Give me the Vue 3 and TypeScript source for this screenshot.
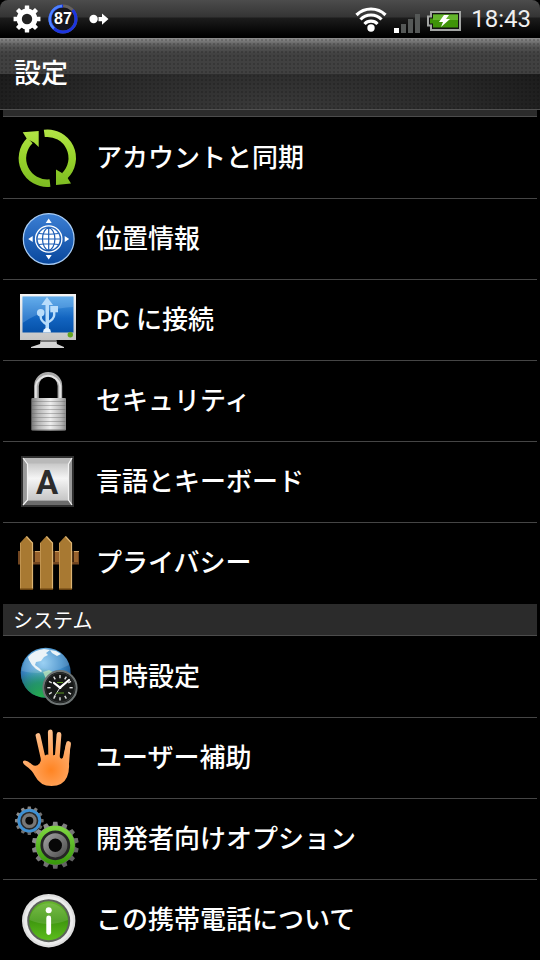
<script setup lang="ts">
type IconName =
  | 'sync' | 'location' | 'pc' | 'lock' | 'keyboard' | 'fence'
  | 'clock' | 'hand' | 'gears' | 'info'

interface Item {
  icon: IconName
  label: string
}

interface Section {
  title: string
  items: Item[]
}

const sections: Section[] = [
  {
    title: 'パーソナル',
    items: [
      { icon: 'sync', label: 'アカウントと同期' },
      { icon: 'location', label: '位置情報' },
      { icon: 'pc', label: 'PC に接続' },
      { icon: 'lock', label: 'セキュリティ' },
      { icon: 'keyboard', label: '言語とキーボード' },
      { icon: 'fence', label: 'プライバシー' },
    ],
  },
  {
    title: 'システム',
    items: [
      { icon: 'clock', label: '日時設定' },
      { icon: 'hand', label: 'ユーザー補助' },
      { icon: 'gears', label: '開発者向けオプション' },
      { icon: 'info', label: 'この携帯電話について' },
    ],
  },
]

// Outline of a cog: each tooth rises from the root radius to the tip radius.
function cog(cx: number, cy: number, tip: number, root: number, teeth: number): string {
  const step = (Math.PI * 2) / teeth
  const points: string[] = []
  for (let i = 0; i < teeth; i++) {
    const a = i * step - Math.PI / 2
    const corners: [number, number][] = [
      [a - step * 0.3, root],
      [a - step * 0.2, tip],
      [a + step * 0.2, tip],
      [a + step * 0.3, root],
    ]
    for (const [angle, r] of corners) {
      points.push(`${(cx + Math.cos(angle) * r).toFixed(2)} ${(cy + Math.sin(angle) * r).toFixed(2)}`)
    }
  }
  return `M${points.join('L')}Z`
}

const statusCog = cog(14, 14, 13.6, 10, 8)
const bigCog = cog(39.3, 38.3, 23.6, 20, 14)
const smallCog = cog(13.3, 13.7, 14.4, 12, 12)
const ticks = Array.from({ length: 12 }, (_, i) => i * 30)
</script>

<template>
  <div class="screen">
    <header class="status">
      <div class="group">
        <svg class="s28" viewBox="0 0 28 28" aria-hidden="true">
          <path :d="statusCog" fill="#fff" />
          <circle cx="14" cy="14" r="10.4" fill="#fff" />
          <circle cx="14" cy="14" r="5.2" fill="#222" />
        </svg>
        <div class="level">
          <svg class="s30" viewBox="0 0 30 30" aria-hidden="true">
            <circle cx="15" cy="15" r="13" fill="#15151c" stroke="#66625f" stroke-width="3" />
            <circle cx="15" cy="15" r="13" fill="none" stroke="#1c35e0" stroke-width="3" pathLength="100" stroke-dasharray="87 13" transform="rotate(-43 15 15)" />
            <path d="M6 24.500A13 13 0 0 1 14 2" fill="none" stroke="#4d83ff" stroke-width="2.400" />
          </svg>
          <span class="level-text">87</span>
        </div>
        <svg class="arrow" viewBox="0 0 20 12" aria-hidden="true">
          <circle cx="4.600" cy="6" r="4.200" fill="#fff" />
          <path d="M9.500 4H13V.5L19.500 6.100 13 11.700V8.200H9.500Z" fill="#fff" />
        </svg>
      </div>
      <div class="group right">
        <svg class="wifi" viewBox="0 0 32 28" aria-hidden="true">
          <g fill="none" stroke="#fff" stroke-width="3.200">
            <path d="M1.500 10A20.500 20.500 0 0 1 30.500 10" />
            <path d="M5.500 14.500A14.500 14.500 0 0 1 26.500 14.500" />
            <path d="M9.500 19A9 9 0 0 1 22.500 19" />
          </g>
          <circle cx="16" cy="23" r="3.700" fill="#fff" />
        </svg>
        <svg class="signal" viewBox="0 0 26 20" aria-hidden="true">
          <path d="M0 15h5v5H0z" fill="#fff" />
          <path d="M7 11h5v9H7zM14 6h5v14h-5zM21 1h5v19h-5z" fill="#555857" />
        </svg>
        <svg class="battery" viewBox="0 0 34 20" aria-hidden="true">
          <path d="M4 1H33V19H4V14.500H1V5.500H4Z" fill="#111" stroke="#a3a5a3" stroke-width="2" />
          <path d="M6 3.500H31V16.500H6V12.500H3V7.500H6Z" fill="#3f9408" />
          <path d="M6 3.500H31V9H6Z" fill="#65b52d" />
          <path d="M17 4h5l-3 4h4l-9 8 2-5h-4z" fill="#fff" />
        </svg>
        <time class="time">18:43</time>
      </div>
    </header>

    <div class="titlebar"><h1>設定</h1></div>

    <main class="list">
      <section v-for="s in sections" :key="s.title" class="section">
        <h2>{{ s.title }}</h2>
        <ul>
          <li v-for="item in s.items" :key="item.label">
            <button type="button" class="row">
              <svg class="icon" viewBox="0 0 64 64" aria-hidden="true">
                <template v-if="item.icon === 'sync'">
                  <defs>
                    <linearGradient id="sy" x1="0" y1="4" x2="0" y2="60" gradientUnits="userSpaceOnUse">
                      <stop offset="0" stop-color="#b2e446" /><stop offset=".5" stop-color="#97d32b" /><stop offset="1" stop-color="#7dbb22" />
                    </linearGradient>
                  </defs>
                  <path d="M34 57A24.800 24.800 0 0 1 14 14.500" fill="none" stroke="url(#sy)" stroke-width="7.500" />
                  <path d="M28.300 7.400A24.800 24.800 0 0 1 48.500 50" fill="none" stroke="url(#sy)" stroke-width="7.500" />
                  <path d="M6.700 6.200 22.700 5V21L18 16.500 11 13ZM40 43.500 46 47 51 51 55 57.500 40 59Z" fill="url(#sy)" />
                </template>

                <template v-else-if="item.icon === 'location'">
                  <defs>
                    <linearGradient id="lo" x1="0" y1="0" x2="0" y2="1">
                      <stop offset="0" stop-color="#3c7fd4" /><stop offset="1" stop-color="#08479d" />
                    </linearGradient>
                  </defs>
                  <circle cx="32.700" cy="32" r="25.400" fill="url(#lo)" stroke="#a9cdf5" stroke-width="1.200" />
                  <circle cx="32.700" cy="32" r="13.200" fill="none" stroke="#fff" stroke-width="1.300" />
                  <circle cx="32.700" cy="32" r="11" fill="#fff" />
                  <g fill="none" stroke="#1b5cb5" stroke-width="1.200">
                    <path d="M32.700 21V43M21.500 32H44M23 26.500Q32.700 28 42.500 26.500M23 37.500Q32.700 36 42.500 37.500" />
                    <ellipse cx="32.700" cy="32" rx="6.200" ry="11" />
                  </g>
                  <path d="M32.700 11.500l3 4.500h-6zM32.700 52.500l3-4.500h-6zM12.200 32l4.500-3v6zM53.200 32l-4.500-3v6z" fill="#fff" />
                </template>

                <template v-else-if="item.icon === 'pc'">
                  <defs>
                    <linearGradient id="pf" x1="0" y1="0" x2="0" y2="1">
                      <stop offset="0" stop-color="#f5f5f5" /><stop offset="1" stop-color="#c4c4c4" />
                    </linearGradient>
                    <linearGradient id="ps" x1="0" y1="0" x2="0" y2="1">
                      <stop offset="0" stop-color="#4fa1e6" /><stop offset=".6" stop-color="#1264c0" /><stop offset="1" stop-color="#0550a8" />
                    </linearGradient>
                  </defs>
                  <path d="M25 51H40L41 56 48 59V60H15V59L24 56Z" fill="#d5d5d5" />
                  <path d="M25 52H40L40.500 54H25Z" fill="#777" />
                  <path d="M4 6H60V52H4Z" fill="url(#pf)" />
                  <path d="M6.500 8.500H57.500V44.500H6.500Z" fill="url(#ps)" />
                  <path d="M6.500 8.500H57.500V19Q28 20 6.500 35Z" fill="#a5d2fa" opacity=".25" />
                  <g fill="#b9ddfb">
                    <path d="M31 9 37 17H33V44H29.500V17H25.300Z" />
                    <circle cx="24.700" cy="24.700" r="3.800" />
                    <path d="M34.300 18H42V24.300H34.300Z" />
                    <path d="M27 44.500a4 4.500 0 0 1 8 0z" fill="#e5f3ff" />
                  </g>
                  <path d="M24.700 27V29Q24.700 33 31 36.500M38.200 23V27Q38.200 31 31 35" fill="none" stroke="#b9ddfb" stroke-width="2.400" />
                  <circle cx="54.300" cy="46.700" r="2.700" fill="#65a51f" />
                </template>

                <template v-else-if="item.icon === 'lock'">
                  <defs>
                    <linearGradient id="lb" x1="0" y1="0" x2="1" y2="0">
                      <stop offset="0" stop-color="#777" /><stop offset=".2" stop-color="#b5b5b5" /><stop offset=".55" stop-color="#ededed" /><stop offset=".85" stop-color="#bbb" /><stop offset="1" stop-color="#8a8a8a" />
                    </linearGradient>
                  </defs>
                  <path d="M20.500 31V17A11.700 11.700 0 0 1 43.900 17V31" fill="none" stroke="#aaa" stroke-width="4.600" />
                  <path d="M19.800 31V17A12.400 12.400 0 0 1 44.200 17V31" fill="none" stroke="#e4e4e4" stroke-width="2" />
                  <rect x="15.300" y="29" width="34.700" height="32.500" rx="1" fill="url(#lb)" />
                  <path d="M16 32.500H49.500M16 36.500H49.500M16 40.500H49.500M16 44.500H49.500M16 48.500H49.500M16 52.500H49.500M16 56.500H49.500M16 60.500H49.500" stroke="#666" stroke-width="1.200" opacity=".4" />
                </template>

                <template v-else-if="item.icon === 'keyboard'">
                  <defs>
                    <linearGradient id="kb" x1="0" y1="0" x2="0" y2="1">
                      <stop offset="0" stop-color="#c8c8c8" /><stop offset=".4" stop-color="#f5f5f5" /><stop offset="1" stop-color="#c5c5c5" />
                    </linearGradient>
                  </defs>
                  <path d="M5 6H58V57H5Z" fill="#303030" />
                  <path d="M7 8H56V55H7Z" fill="#999" />
                  <path d="M7 8H56L52.500 14H11Z" fill="#b9b9b9" />
                  <path d="M7 55H56L52.500 50.500H11Z" fill="#6c6c6c" />
                  <path d="M11 13.500H52.500V50.500H11Z" fill="url(#kb)" />
                  <path d="M7 8 11.500 14V50L7 55M56 8 52.500 14V50L56 55" fill="none" stroke="#f2f2f2" stroke-width="1.200" />
                  <text x="31" y="44" text-anchor="middle" class="key">A</text>
                </template>

                <template v-else-if="item.icon === 'fence'">
                  <path d="M2 20H63V33.500H2Z" fill="#724620" />
                  <path d="M19 20H24V31H19ZM39 20H43V31H39ZM58 20H62V31H58Z" fill="#98622d" />
                  <path d="M17 20H19V31H17ZM37 20H39V31H37ZM56 20H58V31H56Z" fill="#3e240d" />
                  <path d="M19 20.500H24M39 20.500H43M58 20.500H63" stroke="#d0a264" />
                  <g v-for="x in [4, 24, 43]" :key="x" :transform="`translate(${x} 0)`">
                    <path d="M0 12 6.500 5 13 12V59H0Z" fill="#a87932" />
                    <path d="M6.500 5.500 12.500 12V58" fill="none" stroke="#dcb473" stroke-width="1.200" />
                    <path d="M.5 12V58" stroke="#c19450" />
                    <path d="M0 57.500H13V59H0Z" fill="#66400f" />
                  </g>
                </template>

                <template v-else-if="item.icon === 'clock'">
                  <defs>
                    <radialGradient id="gl" cx=".45" cy=".3" r=".75">
                      <stop offset="0" stop-color="#8bc9f1" /><stop offset=".5" stop-color="#3e8cc9" /><stop offset="1" stop-color="#0c3c74" />
                    </radialGradient>
                    <radialGradient id="gg" cx=".4" cy="1" r=".6">
                      <stop offset="0" stop-color="#27b04b" /><stop offset=".5" stop-color="#209a58" stop-opacity=".8" /><stop offset="1" stop-color="#209a58" stop-opacity="0" />
                    </radialGradient>
                  </defs>
                  <circle cx="29.700" cy="27.700" r="25" fill="url(#gl)" />
                  <circle cx="29.700" cy="27.700" r="25" fill="url(#gg)" />
                  <path d="M12 12Q18 5 28 4L34 5 30 8 32 10 28 12 25 16 20 17 19 20 23 23 26 26 25 27 20 24 16 20 13 15ZM34 5 40 6 45 9 41 11 36 8Z" fill="#e8f2f6" />
                  <path d="M27 27 33 25 39 28 37 33 30 34Z" fill="#a4d6b8" />
                  <path d="M5.500 26Q30 32 53 20Q50 6 30 3Q9 5 5.500 26Z" fill="#fff" opacity=".14" />
                  <circle cx="44" cy="42.700" r="16.600" fill="#161817" stroke="#6e7474" stroke-width="2" />
                  <circle cx="44" cy="42.700" r="14.800" fill="none" stroke="#303333" />
                  <path v-for="a in ticks" :key="a" d="M44 30V33.200" stroke="#dedede" stroke-width="1.400" :transform="`rotate(${a} 44 42.700)`" />
                  <path d="M44 42.700 38 38M44 42.700 53 35" stroke="#fff" stroke-width="2.200" stroke-linecap="round" />
                  <path d="M44 42.700 38 52" stroke="#ddd" />
                  <path d="M41 37.500H47M40 48H48" stroke="#5b9423" />
                  <circle cx="44" cy="42.700" r="1.400" fill="#fff" />
                </template>

                <template v-else-if="item.icon === 'hand'">
                  <defs>
                    <radialGradient id="ha" cx="35" cy="44" r="40" gradientUnits="userSpaceOnUse">
                      <stop offset="0" stop-color="#ff8422" /><stop offset=".4" stop-color="#ff9e52" /><stop offset="1" stop-color="#ffc18e" />
                    </radialGradient>
                  </defs>
                  <g fill="none" stroke="url(#ha)" stroke-width="4.800" stroke-linecap="round">
                    <path d="M22 9.500 27.500 34" />
                    <path d="M34.300 6 34.800 34" />
                    <path d="M43 8.500 41 34" />
                    <path d="M52.500 17.500 49 38" />
                  </g>
                  <path d="M7 35.500Q6.500 38 10 40Q16 44 19 50Q24 60 35.500 60Q47 60 51 51Q53.500 45 53 38L54.500 18 50 18 47 31.500Q45.500 34 43.500 31L42 27 38.500 29Q36.500 29.500 34 29L31 28.500 29 29.500 26 28.500 24.500 25Q26 35 23.500 37.500Q20 41.500 16 38.500Q12 35 9 34.500Q7.500 34.500 7 35.500Z" fill="url(#ha)" />
                </template>

                <template v-else-if="item.icon === 'gears'">
                  <defs>
                    <linearGradient id="gm" x1="0" y1="0" x2="1" y2="1">
                      <stop offset="0" stop-color="#9a9a9a" /><stop offset="1" stop-color="#555" />
                    </linearGradient>
                    <linearGradient id="gr" x1="0" y1="0" x2="0" y2="1">
                      <stop offset="0" stop-color="#7dd540" /><stop offset="1" stop-color="#3a9a0d" />
                    </linearGradient>
                  </defs>
                  <path :d="smallCog" fill="url(#gm)" />
                  <circle cx="13.300" cy="13.700" r="10.400" fill="#282828" stroke="#3d8fd2" stroke-width="2.800" />
                  <circle cx="13.300" cy="13.700" r="5.700" fill="#080808" stroke="#777" stroke-width="3.400" />
                  <path :d="bigCog" fill="url(#gm)" />
                  <circle cx="39.300" cy="38.300" r="17.200" fill="#252525" stroke="url(#gr)" stroke-width="4.600" />
                  <circle cx="39.300" cy="38.300" r="9.400" fill="#070707" stroke="url(#gm)" stroke-width="5.400" />
                </template>

                <template v-else>
                  <defs>
                    <linearGradient id="in" x1="0" y1="0" x2="0" y2="1">
                      <stop offset="0" stop-color="#67b52e" /><stop offset=".5" stop-color="#3f970f" /><stop offset="1" stop-color="#5cbd1c" />
                    </linearGradient>
                  </defs>
                  <circle cx="32.700" cy="32.700" r="26.700" fill="#dedede" />
                  <circle cx="32.700" cy="32.700" r="24.500" fill="#ececec" />
                  <circle cx="32.700" cy="32.700" r="21.500" fill="#5c625a" />
                  <circle cx="32.700" cy="32.700" r="19.500" fill="url(#in)" />
                  <path d="M13.400 32Q32 40 52 32A19.500 19.500 0 0 0 13.400 32Z" fill="#fff" opacity=".12" />
                  <circle cx="32.700" cy="22.200" r="3" fill="#fff" />
                  <path d="M32.700 30V44.500" stroke="#fff" stroke-width="4.800" stroke-linecap="round" />
                </template>
              </svg>
              <span>{{ item.label }}</span>
            </button>
          </li>
        </ul>
      </section>
    </main>
  </div>
</template>

<style>
body {
  margin: 0;
  background: #000;
}
</style>

<style scoped>
.screen {
  display: flex;
  flex-direction: column;
  height: 100vh;
  overflow: hidden;
  background: #000;
  color: #fff;
  font-family: Roboto, "Noto Sans CJK JP", sans-serif;
}

.status {
  display: flex;
  flex: none;
  align-items: center;
  justify-content: space-between;
  box-sizing: border-box;
  height: 38px;
  padding: 0 9px 0 13px;
  border-radius: 8px 8px 0 0;
  background: linear-gradient(#4c4c4c, #343434 17px, #1c1c1c 18px, #000 36px);
}

.group {
  display: flex;
  align-items: center;
  gap: 7px;
}

.s28 {
  width: 28px;
  height: 28px;
}

.s30 {
  display: block;
  width: 30px;
  height: 30px;
}

.level {
  position: relative;
}

.level-text {
  position: absolute;
  inset: 0;
  font-family: "Liberation Sans", sans-serif;
  font-size: 16px;
  font-weight: 700;
  line-height: 30px;
  text-align: center;
}

.arrow {
  width: 20px;
  height: 12px;
  margin-left: 4px;
}

.wifi {
  width: 32px;
  height: 28px;
}

.signal {
  width: 26px;
  height: 20px;
  margin-top: 8px;
}

.battery {
  width: 34px;
  height: 20px;
  margin-top: 3px;
}

.time {
  margin-left: 3px;
  font-size: 24px;
  line-height: 38px;
  color: #f0f0f0;
}

.titlebar {
  display: flex;
  flex: none;
  align-items: center;
  box-sizing: border-box;
  height: 72px;
  padding: 0 14px;
  border-bottom: 1px solid #505050;
  background:
    radial-gradient(circle, rgba(0, 0, 0, 0.16) 1px, transparent 1px) 0 0 / 4px 4px,
    linear-gradient(#8e8e8e, #565656 8px, #414141 16px, #404040 36px, transparent 36px),
    radial-gradient(ellipse at 50% 100%, #3a3a3a, #292929 50%, #121212);
}

h1 {
  margin: 0;
  font-size: 27px;
  font-weight: 500;
  line-height: 36px;
}

.list {
  flex: 1;
  min-height: 0;
  padding: 0 3px;
  overflow: hidden;
}

h2 {
  box-sizing: border-box;
  height: 32px;
  margin: 0;
  padding: 0 10px;
  border-bottom: 1px solid #4c4c4c;
  background: #2b2b2b;
  font-size: 20px;
  font-weight: 400;
  line-height: 34px;
}

/* The list is scrolled so that the first heading slides under the title bar. */
.section:first-child h2 {
  margin-top: -25px;
}

ul {
  margin: 0;
  padding: 1px 0 0;
  list-style: none;
}

li {
  border-bottom: 1px solid #454545;
}

li:last-child {
  border-color: transparent;
}

.row {
  display: flex;
  align-items: center;
  gap: 16px;
  width: 100%;
  height: 80px;
  padding: 0 13px;
  border: 0;
  background: none;
  color: inherit;
  font: inherit;
  font-size: 26px;
  font-weight: 500;
  line-height: 36px;
  text-align: left;
}

.icon {
  flex: none;
  width: 64px;
  height: 64px;
  overflow: visible;
}

.key {
  fill: #2c2c2c;
  font-size: 33px;
  font-weight: 700;
}
</style>
